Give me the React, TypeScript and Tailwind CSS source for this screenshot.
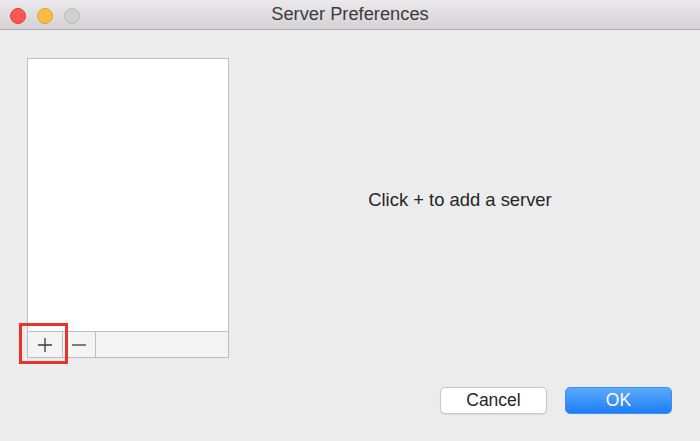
export default function App() {
  return (
    <div
      className="w-[700px] h-[441px] bg-[#ececec] flex flex-col overflow-hidden"
      style={{ fontFamily: '"Helvetica Neue", "Liberation Sans", Arial, sans-serif' }}
    >
      <TitleBar />
      <div className="flex-1 flex flex-col">
        <div className="flex">
          <div className="pl-[27px] pt-[28px]">
            <ServerList />
          </div>
          <div className="flex-1 flex items-center justify-center pt-[28px] pr-[9px] h-[328px]">
            <p className="text-[18.4px] text-[#262626] leading-none mt-[-16px]">Click + to add a server</p>
          </div>
        </div>
        <div className="flex justify-end gap-[18px] pr-[28px] pt-[29px]">
          <button className="w-[107px] h-[27px] rounded-[5px] bg-white border border-[#c8c8c8] shadow-[0_1px_1px_rgba(0,0,0,0.08)] text-[17.5px] text-[#262626] leading-none">
            Cancel
          </button>
          <button className="w-[107px] h-[27px] rounded-[5px] bg-gradient-to-b from-[#5aa9fb] to-[#1a7ef5] border border-[#3d8ef5] text-[17.5px] text-white leading-none">
            OK
          </button>
        </div>
      </div>
    </div>
  );
}

function TitleBar() {
  return (
    <div className="relative h-[30px] bg-gradient-to-b from-[#ebe9eb] to-[#d4d2d4] border-b border-[#b1afb1] flex items-center justify-center">
      <div className="absolute left-[10px] top-[8px] flex gap-[11px]">
        <span className="w-[16px] h-[16px] rounded-full bg-[#fc5753] border border-[#de3f3b]" />
        <span className="w-[16px] h-[16px] rounded-full bg-[#fdbc40] border border-[#dea236]" />
        <span className="w-[16px] h-[16px] rounded-full bg-[#d0ced0] border border-[#bcbabc]" />
      </div>
      <span className="text-[18.3px] text-[#3b3b3b] leading-none">Server Preferences</span>
    </div>
  );
}

function ServerList() {
  return (
    <div className="relative w-[202px] h-[300px] border border-[#bdbdbd] bg-white flex flex-col">
      <div className="flex-1" />
      <div className="h-[26px] border-t border-[#bdbdbd] bg-[#f4f4f4] flex">
        <div className="w-[35px] border-r border-[#bdbdbd] flex items-center justify-center">
          <svg width="16" height="16" viewBox="0 0 16 16">
            <path d="M8 1v14M1 8h14" stroke="#3a3a3a" strokeWidth="1.3" />
          </svg>
        </div>
        <div className="w-[33px] border-r border-[#bdbdbd] flex items-center justify-center">
          <svg width="16" height="16" viewBox="0 0 16 16">
            <path d="M1 8h14" stroke="#3a3a3a" strokeWidth="1.3" />
          </svg>
        </div>
        <div className="flex-1" />
      </div>
      <div className="absolute left-[-9px] bottom-[-7px] w-[49px] h-[41px] border-[3px] border-[#e8332a]" />
    </div>
  );
}
